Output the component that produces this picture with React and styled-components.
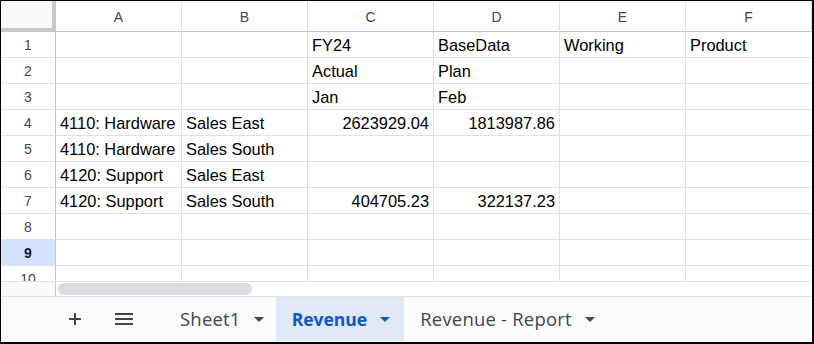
import React from "react";
import styled, { createGlobalStyle } from "styled-components";

const GlobalStyle = createGlobalStyle`
  html, body { margin: 0; padding: 0; background: #ffffff; }
  * { box-sizing: border-box; }
`;

const Frame = styled.div`
  width: 814px;
  height: 344px;
  border-style: solid;
  border-color: #000;
  border-width: 1px 2px 2px 1px;
  display: flex;
  flex-direction: column;
  overflow: hidden;
  background: #fff;
`;

const GridViewport = styled.div`
  height: 280px;
  overflow: hidden;
  flex: none;
`;

const Grid = styled.div`
  display: grid;
  grid-template-columns: 55px repeat(6, 126px);
  grid-template-rows: 31px;
  grid-auto-rows: 26px;
`;

const Corner = styled.div`
  background: #f8f9fa;
  border-right: 4px solid #c7c7c7;
  border-bottom: 4px solid #c7c7c7;
`;

const ColHeader = styled.div`
  display: flex;
  align-items: center;
  justify-content: center;
  font-family: "Liberation Sans", Arial, sans-serif;
  font-size: 14px;
  color: #444746;
  border-right: 1px solid #e1e1e1;
  border-bottom: 1px solid #c4c7c5;
  padding-top: 1px;
`;

const RowHeader = styled.div`
  display: flex;
  align-items: center;
  justify-content: center;
  font-family: "Liberation Sans", Arial, sans-serif;
  font-size: 14px;
  color: ${(p) => (p.$selected ? "#041e49" : "#444746")};
  font-weight: ${(p) => (p.$selected ? 700 : 400)};
  background: ${(p) => (p.$selected ? "#d3e3fd" : "#ffffff")};
  border-right: 1px solid #c4c7c5;
  border-bottom: 1px solid #e1e1e1;
`;

const Cell = styled.div`
  font-family: "Liberation Sans", Arial, sans-serif;
  font-size: 16.4px;
  line-height: 25px;
  padding: 1px 4px 0 4px;
  color: #000;
  white-space: nowrap;
  overflow: visible;
  text-align: ${(p) => (p.$num ? "right" : "left")};
  border-right: 1px solid ${(p) => (p.$last ? "transparent" : "#e1e1e1")};
  border-bottom: 1px solid #e1e1e1;
`;

const ScrollRow = styled.div`
  height: 15px;
  flex: none;
  display: flex;
  border-top: 1px solid #e1e1e1;
`;

const ScrollStub = styled.div`
  width: 55px;
  background: #f8f9fa;
  border-right: 1px solid #c4c7c5;
`;

const Track = styled.div`
  flex: 1;
  padding: 1px 0 0 2px;
  background: #fff;
`;

const Thumb = styled.div`
  width: 194px;
  height: 12px;
  border-radius: 6px;
  background: #dadce0;
`;

const TabBar = styled.div`
  height: 45px;
  flex: none;
  display: flex;
  align-items: stretch;
  background: #f9fbfd;
  border-top: 1px solid #e1e3e6;
  padding-left: 54px;
`;

const IconButton = styled.div`
  width: 40px;
  display: flex;
  align-items: center;
  justify-content: center;
  margin-right: ${(p) => p.$gap}px;
  color: #444746;
`;

const Tab = styled.div`
  display: flex;
  align-items: center;
  padding: 0 ${(p) => (p.$active ? 14 : 12)}px 0 16px;
  gap: 13px;
  background: ${(p) => (p.$active ? "#e1e9f7" : "transparent")};
  color: ${(p) => (p.$active ? "#0b57d0" : "#444746")};
  font-family: "Open Sans", "Noto Sans", sans-serif;
  font-size: ${(p) => (p.$active ? 17.5 : 18.5)}px;
  letter-spacing: ${(p) => (p.$active ? 0 : 0.2)}px;
  font-weight: ${(p) => (p.$active ? 700 : 500)};
  white-space: nowrap;
  padding-bottom: 1px;
`;

const Caret = ({ color }) => (
  <svg width="10" height="5" viewBox="0 0 10 5" style={{ marginTop: 1 }}>
    <path d="M0 0 L10 0 L5 5 Z" fill={color} />
  </svg>
);

const PlusIcon = () => (
  <svg width="14" height="14" viewBox="0 0 14 14">
    <path d="M7 1 V13 M1 7 H13" stroke="#444746" strokeWidth="2" fill="none" />
  </svg>
);

const MenuIcon = () => (
  <svg width="18" height="12" viewBox="0 0 18 12">
    <path d="M0 1 H18 M0 6 H18 M0 11 H18" stroke="#444746" strokeWidth="2" fill="none" />
  </svg>
);

const columns = ["A", "B", "C", "D", "E", "F"];

const data = [
  ["", "", "FY24", "BaseData", "Working", "Product"],
  ["", "", "Actual", "Plan", "", ""],
  ["", "", "Jan", "Feb", "", ""],
  ["4110: Hardware", "Sales East", 2623929.04, 1813987.86, "", ""],
  ["4110: Hardware", "Sales South", "", "", "", ""],
  ["4120: Support", "Sales East", "", "", "", ""],
  ["4120: Support", "Sales South", 404705.23, 322137.23, "", ""],
  ["", "", "", "", "", ""],
  ["", "", "", "", "", ""],
  ["", "", "", "", "", ""],
];

const tabs = [
  { name: "Sheet1", active: false },
  { name: "Revenue", active: true },
  { name: "Revenue - Report", active: false },
];

export default function App() {
  return (
    <>
      <GlobalStyle />
      <Frame>
        <GridViewport>
          <Grid>
            <Corner />
            {columns.map((c) => (
              <ColHeader key={c}>{c}</ColHeader>
            ))}
            {data.map((row, r) => (
              <React.Fragment key={r}>
                <RowHeader $selected={r === 8}>{r + 1}</RowHeader>
                {row.map((v, c) => (
                  <Cell key={c} $num={typeof v === "number"} $last={c === 5}>
                    {typeof v === "number" ? v.toFixed(2) : v}
                  </Cell>
                ))}
              </React.Fragment>
            ))}
          </Grid>
        </GridViewport>
        <ScrollRow>
          <ScrollStub />
          <Track>
            <Thumb />
          </Track>
        </ScrollRow>
        <TabBar>
          <IconButton $gap={9}>
            <PlusIcon />
          </IconButton>
          <IconButton $gap={20}>
            <MenuIcon />
          </IconButton>
          {tabs.map((t) => (
            <Tab key={t.name} $active={t.active}>
              <span>{t.name}</span>
              <Caret color={t.active ? "#0b57d0" : "#444746"} />
            </Tab>
          ))}
        </TabBar>
      </Frame>
    </>
  );
}
